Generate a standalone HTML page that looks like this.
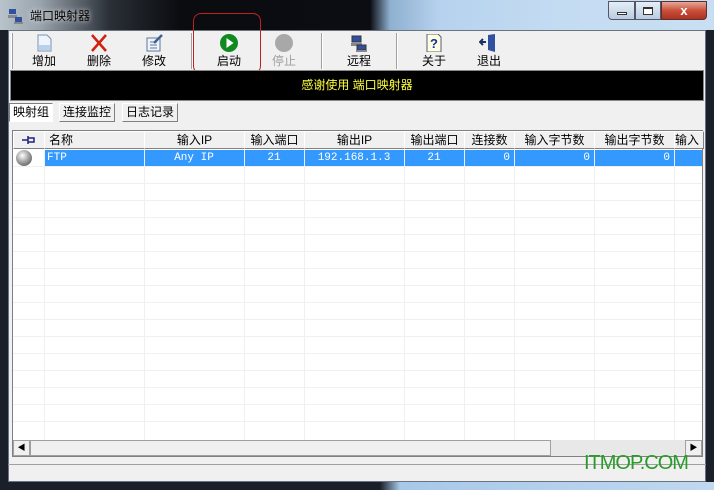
<!DOCTYPE html>
<html><head><meta charset="utf-8"><style>
*{margin:0;padding:0;box-sizing:border-box}
body{width:714px;height:490px;overflow:hidden;position:relative;font-family:"Liberation Sans","Noto Sans CJK SC",sans-serif;font-size:12px;background:#1a1f2a}
.abs{position:absolute}
#title{left:0;top:0;width:714px;height:30px;background:linear-gradient(90deg,#b9c3cc 0,#9aa4ad 40px,#2a2f36 110px,#0a0c10 180px,#0b0d12 370px,#8fb0d0 390px,#b6d2ee 440px,#c4dcf2 560px,#c9def2 714px)}
#client{left:8px;top:30px;width:698px;height:452px;background:#f0f0f0;border:1px solid #6a7480}
.tb{position:absolute;top:3px;width:60px;text-align:center;font-size:12px;line-height:14px;color:#000}
.tb svg{display:block;margin:0 auto 2px}
.sep{position:absolute;top:2px;width:2px;height:36px;border-left:1px solid #a0a0a0;border-right:1px solid #fff}
#banner{left:10px;top:70px;width:694px;height:31px;background:#000;border:1px solid #888;color:#ffff40;text-align:center;line-height:29px;font-size:12px}
.tab{position:absolute;top:103px;height:19px;border:1px solid;border-color:#fff #808080 #808080 #fff;line-height:17px;padding:0 3px;font-size:12px}
#list{left:12px;top:130px;width:691px;height:327px;background:#fff;border:1px solid #808080}
.hd{position:absolute;top:0;height:18px;background:#f0f0f0;border-right:1px solid #808080;border-bottom:1px solid #808080;border-left:1px solid #fff;border-top:1px solid #fff;font-size:12px;line-height:16px;text-align:center;overflow:hidden;white-space:nowrap}
.vl{position:absolute;top:18px;width:1px;height:291px;background:#f0f0f0}
.hl{position:absolute;left:0;width:689px;height:1px;background:#f0f0f0}
.cell{position:absolute;top:19px;height:16px;line-height:16px;color:#fff;font-family:"Liberation Mono","Noto Sans CJK SC",monospace;font-size:11px;text-align:center}
</style></head><body>
<div id="title" class="abs">
 <svg class="abs" style="left:7px;top:8px" width="16" height="16"><rect x="2" y="1" width="7" height="5" fill="#3050a0"/><rect x="1" y="7" width="9" height="3" fill="#888"/><rect x="8" y="9" width="7" height="5" fill="#3050a0"/><rect x="7" y="14" width="9" height="2" fill="#888"/></svg>
 <div class="abs" style="left:30px;top:7px;font-size:12px;color:#000;text-shadow:0 0 6px #fff">端口映射器</div>
 <div class="abs" style="left:608px;top:1px;width:27px;height:19px;border:1px solid #556;border-radius:0 0 0 4px;background:linear-gradient(#e6eef7,#b8cce2)"><div style="margin:10px auto 0;width:10px;height:3px;border:1px solid #333;background:#fff"></div></div>
 <div class="abs" style="left:635px;top:1px;width:26px;height:19px;border:1px solid #556;background:linear-gradient(#e6eef7,#b8cce2)"><div style="margin:5px auto 0;width:10px;height:8px;border:1px solid #333;border-top-width:2px;background:#fff"></div></div>
 <div class="abs" style="left:661px;top:1px;width:46px;height:19px;border:1px solid #533;border-radius:0 0 4px 0;background:linear-gradient(#e8a898,#c8503a 50%,#b03020);color:#fff;font-weight:bold;text-align:center;line-height:17px;font-size:13px">x</div>
</div>
<div id="client" class="abs">
 <div class="sep" style="left:2px;border-left:1px solid #fff;border-right:1px solid #a0a0a0"></div>
 <div class="tb" style="left:5px"><svg width="20" height="18"><path d="M4 1h9l4 4v12H4z" fill="#eef4fb" stroke="#7a92b4"/><rect x="5" y="11" width="11" height="5" fill="#b8d0ec"/></svg>增加</div>
 <div class="tb" style="left:60px"><svg width="20" height="18"><path d="M3 1L17 17M17 1L3 17" stroke="#d02010" stroke-width="2.5"/></svg>删除</div>
 <div class="tb" style="left:115px"><svg width="20" height="18"><rect x="3" y="4" width="13" height="13" fill="#f0f4fa" stroke="#5a78a0"/><path d="M6 8h7M6 11h7M6 14h7" stroke="#5a78a0"/><path d="M10 9L18 1" stroke="#406090" stroke-width="2.5"/></svg>修改</div>
 <div class="sep" style="left:182px"></div>
 <div class="tb" style="left:190px"><svg width="20" height="18"><circle cx="10" cy="9" r="9" fill="#108a20"/><path d="M7.5 4v10l7-5z" fill="#fff"/></svg>启动</div>
 <div class="tb" style="left:245px;color:#a0a0a0"><svg width="20" height="18"><circle cx="10" cy="9" r="9" fill="#a8a8a8"/></svg>停止</div>
 <div class="sep" style="left:312px"></div>
 <div class="tb" style="left:320px"><svg width="20" height="18"><rect x="3" y="2" width="9" height="6" fill="#3050a0" stroke="#333"/><rect x="2" y="9" width="11" height="3" fill="#888"/><rect x="8" y="11" width="9" height="5" fill="#3050a0" stroke="#333"/><rect x="7" y="16" width="11" height="2" fill="#888"/></svg>远程</div>
 <div class="sep" style="left:387px"></div>
 <div class="tb" style="left:395px"><svg width="20" height="18"><path d="M3 0h11l3 3v15H3z" fill="#ffffe0" stroke="#506080"/><text x="6" y="14" font-size="13" font-weight="bold" fill="#1030a0" font-family="Liberation Sans">?</text></svg>关于</div>
 <div class="tb" style="left:450px"><svg width="20" height="18"><path d="M9 1l7-1v18l-7-2z" fill="#3050a0"/><path d="M1 8h6M4 5l-3 3 3 3" stroke="#1b3060" stroke-width="2" fill="none"/></svg>退出</div>
</div>
<div class="abs" style="left:193px;top:13px;width:68px;height:61px;border:1px solid #c02020;border-radius:8px"></div>
<div id="banner" class="abs">感谢使用 端口映射器</div>
<div class="tab" style="left:9px;border-color:#808080 #fff #fff #808080;background:#fff">映射组</div>
<div class="tab" style="left:59px">连接监控</div>
<div class="tab" style="left:122px">日志记录</div>
<div id="list" class="abs">
 <div class="hd" style="left:0;width:32px"><svg width="16" height="12" style="margin-top:2px"><path d="M1 6h6M7 2v8M7 4h6v4H7" stroke="#202080" stroke-width="1.5" fill="none"/></svg></div>
 <div class="hd" style="left:31px;width:101px;text-align:left;padding-left:4px">名称</div>
 <div class="hd" style="left:131px;width:101px">输入IP</div>
 <div class="hd" style="left:231px;width:61px">输入端口</div>
 <div class="hd" style="left:291px;width:101px">输出IP</div>
 <div class="hd" style="left:391px;width:61px">输出端口</div>
 <div class="hd" style="left:451px;width:51px">连接数</div>
 <div class="hd" style="left:501px;width:81px">输入字节数</div>
 <div class="hd" style="left:581px;width:81px">输出字节数</div>
 <div class="hd" style="left:661px;width:30px;text-align:left">输入</div>
 <div class="abs" style="left:31px;top:19px;width:658px;height:16px;background:#3399ff"></div>
 <div class="abs" style="left:3px;top:19px;width:16px;height:16px;border-radius:50%;background:radial-gradient(circle at 40% 35%,#fff,#999 50%,#444)"></div>
 <div class="cell" style="left:34px;text-align:left">FTP</div>
 <div class="cell" style="left:131px;width:100px">Any IP</div>
 <div class="cell" style="left:231px;width:60px">21</div>
 <div class="cell" style="left:291px;width:100px">192.168.1.3</div>
 <div class="cell" style="left:391px;width:60px">21</div>
 <div class="cell" style="left:451px;width:46px;text-align:right">0</div>
 <div class="cell" style="left:501px;width:76px;text-align:right">0</div>
 <div class="cell" style="left:581px;width:76px;text-align:right">0</div>
 <div class="vl" style="left:31px"></div><div class="vl" style="left:131px"></div><div class="vl" style="left:231px"></div><div class="vl" style="left:291px"></div><div class="vl" style="left:391px"></div><div class="vl" style="left:451px"></div><div class="vl" style="left:501px"></div><div class="vl" style="left:581px"></div><div class="vl" style="left:661px"></div>
 <div class="hl" style="top:35px"></div><div class="hl" style="top:52px"></div><div class="hl" style="top:69px"></div><div class="hl" style="top:86px"></div><div class="hl" style="top:103px"></div><div class="hl" style="top:120px"></div><div class="hl" style="top:137px"></div><div class="hl" style="top:154px"></div><div class="hl" style="top:171px"></div><div class="hl" style="top:188px"></div><div class="hl" style="top:205px"></div><div class="hl" style="top:222px"></div><div class="hl" style="top:239px"></div><div class="hl" style="top:256px"></div><div class="hl" style="top:273px"></div><div class="hl" style="top:290px"></div>
 <div class="abs" style="left:0;top:309px;width:689px;height:16px;background:#e8e8e8">
  <div class="abs" style="left:0;top:0;width:17px;height:16px;background:#f0f0f0;border:1px solid #a0a0a0;font-size:8px;text-align:center;line-height:14px">◀</div>
  <div class="abs" style="left:17px;top:0;width:521px;height:16px;background:#f0f0f0;border:1px solid #a0a0a0"></div>
  <div class="abs" style="left:672px;top:0;width:17px;height:16px;background:#f0f0f0;border:1px solid #a0a0a0;font-size:8px;text-align:center;line-height:14px">▶</div>
 </div>
</div>
<div class="abs" style="left:8px;top:464px;width:698px;height:1px;background:#a0a0a0"></div>
<div class="abs" style="left:584px;top:452px;color:#2a9a2a;font-size:20px;letter-spacing:-1px;font-family:'Liberation Sans',sans-serif">ITMOP.COM</div>
<div class="abs" style="left:0;top:482px;width:714px;height:8px;background:linear-gradient(90deg,#1a1f2a 0,#1a1f2a 380px,#a8c8e8 400px,#c0d8f0 714px)"></div>
</body></html>
